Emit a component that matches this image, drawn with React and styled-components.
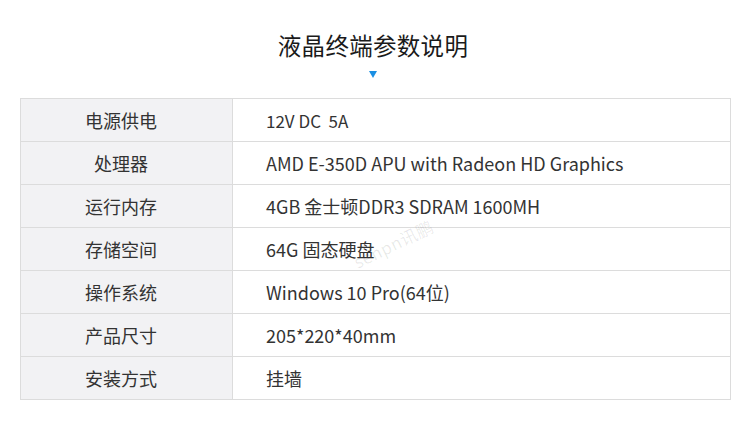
import React from 'react';
import styled, { createGlobalStyle } from 'styled-components';

const GlobalStyle = createGlobalStyle`
  html, body {
    margin: 0;
    padding: 0;
    background: #ffffff;
  }
  body {
    font-family: "Noto Sans CJK SC", "Noto Sans", sans-serif;
  }
`;

const Page = styled.div`
  width: 750px;
  height: 446px;
  position: relative;
  overflow: hidden;
  background: #fff;
`;

const Header = styled.div`
  display: flex;
  flex-direction: column;
  align-items: center;
  padding-top: 29px;
  margin-left: -4px;
`;

const Title = styled.h1`
  margin: 0;
  font-size: 23.5px;
  line-height: 32px;
  font-weight: 400;
  color: #1a1a1a;
  letter-spacing: 0.3px;
`;

const Arrow = styled.div`
  margin-top: 10px;
  width: 0;
  height: 0;
  border-left: 4px solid transparent;
  border-right: 4px solid transparent;
  border-top: 7px solid #1a8fe3;
`;

const Table = styled.div`
  margin: 20px 0 0 20px;
  width: 709px;
  border: 1px solid #dcdcdc;
  display: grid;
  grid-template-columns: 212px 1fr;
`;

const Label = styled.div`
  height: 42px;
  display: flex;
  align-items: center;
  justify-content: center;
  padding-right: 11px;
  background: #f2f2f4;
  border-right: 1px solid #dcdcdc;
  border-top: ${p => (p.$first ? 'none' : '1px solid #dcdcdc')};
  font-size: 18px;
  color: #333;
`;

const Value = styled.div`
  height: 42px;
  display: flex;
  align-items: center;
  padding-left: 33px;
  border-top: ${p => (p.$first ? 'none' : '1px solid #dcdcdc')};
  font-size: ${p => (p.$narrow ? '17px' : '18px')};
  color: #333;
  white-space: pre;
`;

const Watermark = styled.div`
  position: absolute;
  left: 349px;
  top: 251px;
  transform: rotate(-26deg);
  transform-origin: left top;
  font-family: "Noto Sans CJK SC", sans-serif;
  font-size: 17px;
  font-weight: 400;
  color: rgba(0, 0, 0, 0.09);
  letter-spacing: 0.5px;
  white-space: nowrap;
`;

const rows = [
  ['电源供电', '12V DC  5A', true],
  ['处理器', 'AMD E-350D APU with Radeon HD Graphics'],
  ['运行内存', '4GB 金士顿DDR3 SDRAM 1600MH'],
  ['存储空间', '64G 固态硬盘'],
  ['操作系统', 'Windows 10 Pro(64位)'],
  ['产品尺寸', '205*220*40mm'],
  ['安装方式', '挂墙'],
];

export default function App() {
  return (
    <Page>
      <GlobalStyle />
      <Header>
        <Title>液晶终端参数说明</Title>
        <Arrow />
      </Header>
      <Table>
        {rows.map(([k, v, narrow], i) => (
          <React.Fragment key={k}>
            <Label $first={i === 0}>{k}</Label>
            <Value $first={i === 0} $narrow={narrow}>{v}</Value>
          </React.Fragment>
        ))}
      </Table>
      <Watermark>senpn讯鹏</Watermark>
    </Page>
  );
}
